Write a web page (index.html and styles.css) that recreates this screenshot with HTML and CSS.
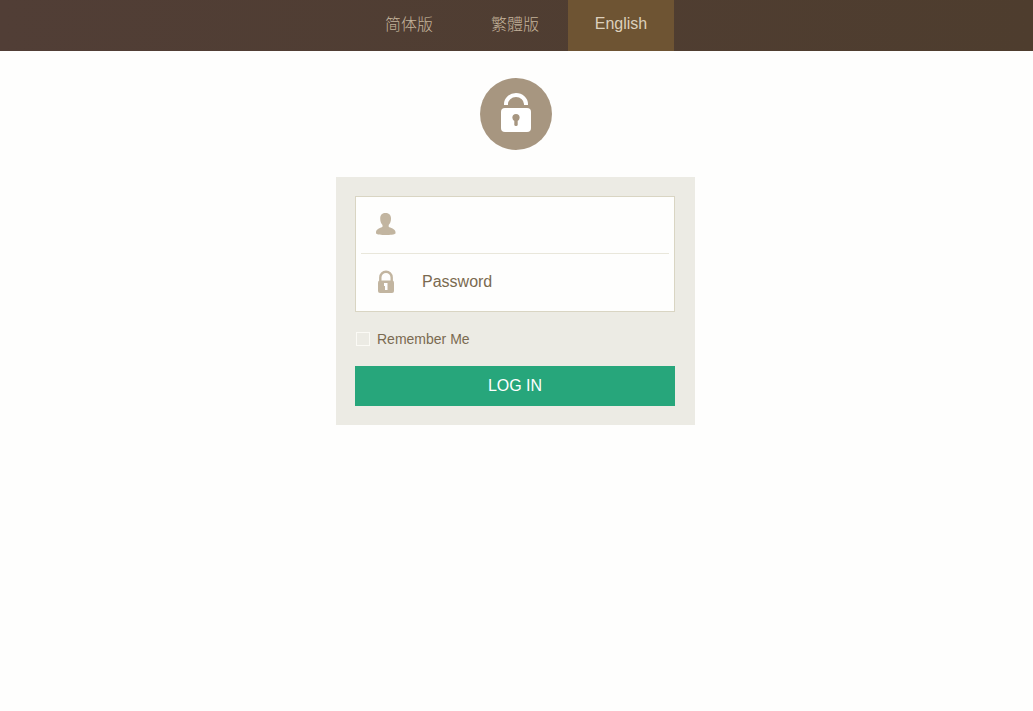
FILE: index.html
```html
<!DOCTYPE html>
<html lang="en">

<head>
  <meta charset="UTF-8" />
  <meta name="viewport" content="width=device-width, initial-scale=1" />
  <title>Log In</title>
  <link rel="stylesheet" href="styles.css">
</head>

<body>

  <header>
    <nav class="lang-nav">
      <a href="#" lang="zh-Hans">简体版</a>
      <a href="#" lang="zh-Hant">繁體版</a>
      <a href="#" class="active">English</a>
    </nav>
  </header>

  <main>
    <div class="logo">
      <svg width="72" height="72" viewBox="0 0 72 72" aria-hidden="true">
        <circle cx="36" cy="36" r="36" fill="#a79680" />
        <path d="M26 27V26a10 9 0 0 1 20 0v1" fill="none" stroke="#fff" stroke-width="4" />
        <rect x="21" y="30" width="30" height="24" rx="4" fill="#fff" />
        <circle cx="36" cy="39.500" r="3.600" fill="#a79680" />
        <rect x="34.300" y="40" width="3.400" height="8" rx="1.500" fill="#a79680" />
      </svg>
    </div>

    <form class="login-form">
      <div class="fields">
        <div class="field">
          <label for="username" aria-label="Username">
            <svg width="20" height="24" viewBox="0 0 20 24" aria-hidden="true">
              <path d="M9.500 0C12.500 0 15 1.500 15 5.500c0 3-.8 5-2.300 6.500v1.800c1.200 1 6.800 2.200 6.800 5.200v1.500c-2 2-17.500 2-19.500 0V19c0-3 5.300-4.200 6.500-5.200V12C5 10.500 4.200 8.500 4.200 5.500 4.200 1.500 6.500 0 9.500 0z" fill="#c2b5a0" />
            </svg>
          </label>
          <input type="text" id="username" name="username">
        </div>
        <div class="field">
          <label for="password" aria-label="Password">
            <svg width="20" height="24" viewBox="0 0 20 24" aria-hidden="true">
              <path d="M4.300 12V7.500a5.700 5.700 0 0 1 11.400 0V12" fill="none" stroke="#c2b5a0" stroke-width="2.400" />
              <rect x="2" y="10.500" width="16" height="12.500" rx="2" fill="#c2b5a0" />
              <path d="M8 13h3.500v7H9v-4H8z" fill="#fff" />
            </svg>
          </label>
          <input type="password" id="password" name="password" placeholder="Password">
        </div>
      </div>

      <label class="remember">
        <input type="checkbox" name="remember">
        Remember Me
      </label>

      <button type="submit">LOG IN</button>
    </form>
  </main>

</body>

</html>
```
FILE: styles.css
```css
* {
  box-sizing: border-box;
}

body {
  margin: 0;
  background-color: #fefefd;
  color: #7a6a50;
  font-family: "Liberation Sans", Arial, "Noto Sans CJK SC", sans-serif;
  font-size: 16px;
}

header {
  background: linear-gradient(to right, #513e36, #4e3d2e);
  padding-right: 3px;
}

.lang-nav {
  display: flex;
  justify-content: center;
}

.lang-nav a {
  width: 106px;
  height: 51px;
  padding-bottom: 4px;
  line-height: 47px;
  text-align: center;
  text-decoration: none;
  color: #c4b39b;
}

.lang-nav a:lang(zh-Hans) {
  font-family: "Noto Sans CJK SC", sans-serif;
  font-weight: 300;
}

.lang-nav a:lang(zh-Hant) {
  font-family: "Noto Sans CJK TC", sans-serif;
  font-weight: 300;
}

.lang-nav a.active {
  background-color: #6e5433;
  color: #ddd0bc;
}

main {
  display: flex;
  flex-direction: column;
  align-items: center;
  padding: 27px 2px 27px 0;
}

.logo svg,
.field svg {
  display: block;
}

.login-form {
  width: 100%;
  max-width: 359px;
  margin-top: 27px;
  padding: 19px 20px 19px 19px;
  background-color: #ecebe4;
}

.fields {
  padding: 0 5px 2px;
  background-color: #fefefd;
  border: 1px solid #d9d5c3;
}

.field {
  display: flex;
  align-items: center;
  height: 56px;
  padding-left: 15px;
}

.field + .field {
  border-top: 1px solid #e9e7db;
}

.field input {
  flex: 1;
  min-width: 0;
  height: 40px;
  margin-left: 26px;
  padding: 0;
  border: none;
  outline: none;
  background: transparent;
  color: #7a6a50;
  font: inherit;
}

.field input::placeholder {
  color: #7a6a50;
  opacity: 1;
}

.remember {
  display: flex;
  align-items: center;
  height: 54px;
  font-size: 14px;
}

.remember input {
  appearance: none;
  width: 14px;
  height: 14px;
  margin: 0 7px 0 1px;
  border: 1px solid #fbfaf5;
  background: transparent;
}

.remember input:checked {
  background-color: #27a67b;
}

.login-form button {
  display: block;
  width: 100%;
  height: 40px;
  padding: 0;
  border: none;
  background-color: #27a67b;
  color: #fff;
  font: inherit;
  cursor: pointer;
}

.login-form button:hover {
  background-color: #209069;
}
```
